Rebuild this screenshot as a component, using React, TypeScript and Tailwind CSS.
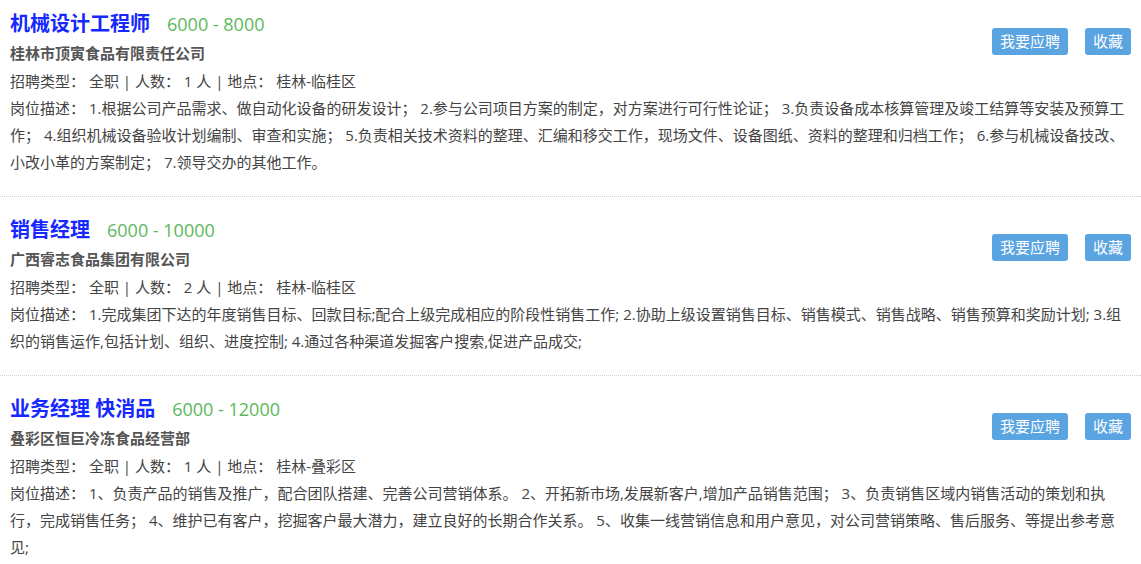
const jobs = [
  {
    title: '机械设计工程师',
    salary: '6000 - 8000',
    company: '桂林市顶寅食品有限责任公司',
    count: 1,
    place: '桂林-临桂区',
    desc:
      '1.根据公司产品需求、做自动化设备的研发设计； 2.参与公司项目方案的制定，对方案进行可行性论证； 3.负责设备成本核算管理及竣工结算等安装及预算工作； 4.组织机械设备验收计划编制、审查和实施； 5.负责相关技术资料的整理、汇编和移交工作，现场文件、设备图纸、资料的整理和归档工作； 6.参与机械设备技改、小改小革的方案制定； 7.领导交办的其他工作。',
  },
  {
    title: '销售经理',
    salary: '6000 - 10000',
    company: '广西睿志食品集团有限公司',
    count: 2,
    place: '桂林-临桂区',
    desc:
      '1.完成集团下达的年度销售目标、回款目标;配合上级完成相应的阶段性销售工作; 2.协助上级设置销售目标、销售模式、销售战略、销售预算和奖励计划; 3.组织的销售运作,包括计划、组织、进度控制; 4.通过各种渠道发掘客户搜索,促进产品成交;',
  },
  {
    title: '业务经理 快消品',
    salary: '6000 - 12000',
    company: '叠彩区恒巨冷冻食品经营部',
    count: 1,
    place: '桂林-叠彩区',
    desc:
      '1、负责产品的销售及推广，配合团队搭建、完善公司营销体系。 2、开拓新市场,发展新客户,增加产品销售范围； 3、负责销售区域内销售活动的策划和执行，完成销售任务； 4、维护已有客户，挖掘客户最大潜力，建立良好的长期合作关系。 5、收集一线营销信息和用户意见，对公司营销策略、售后服务、等提出参考意见;',
  },
];

const font = { fontFamily: '"Open Sans", "Noto Sans CJK SC", sans-serif' };

export default function App() {
  return (
    <div className="w-[1141px] bg-white overflow-hidden" style={font}>
      <div className="-mt-[9px]">
        {jobs.map((job) => (
          <div
            key={job.title}
            className="relative px-[10px] pt-[18px] pb-[20px] border-b border-dotted border-[#cfcfcf]"
          >
            <div className="absolute right-[10px] top-[37px] flex gap-[17px]">
              <button className="h-[27px] px-[8px] rounded-[3px] bg-[#5ba4e2] text-white text-[15px] leading-[27px]">
                我要应聘
              </button>
              <button className="h-[27px] px-[8px] rounded-[3px] bg-[#5ba4e2] text-white text-[15px] leading-[27px]">
                收藏
              </button>
            </div>
            <div className="flex items-baseline h-[30px] leading-[30px]">
              <span className="text-[20px] font-bold text-[#1428ff]">{job.title}</span>
              <span className="ml-[17px] text-[18px] text-[#5cb85c]">{job.salary}</span>
            </div>
            <div className="h-[28px] leading-[28px] text-[15px] font-bold text-[#555]">
              {job.company}
            </div>
            <div className="h-[28px] leading-[28px] text-[15px] text-[#444]">
              招聘类型： 全职 | 人数： {job.count} 人 | 地点： {job.place}
            </div>
            <p className="text-[15px] leading-[27px] text-[#444]">
              岗位描述： {job.desc}
            </p>
          </div>
        ))}
      </div>
    </div>
  );
}
